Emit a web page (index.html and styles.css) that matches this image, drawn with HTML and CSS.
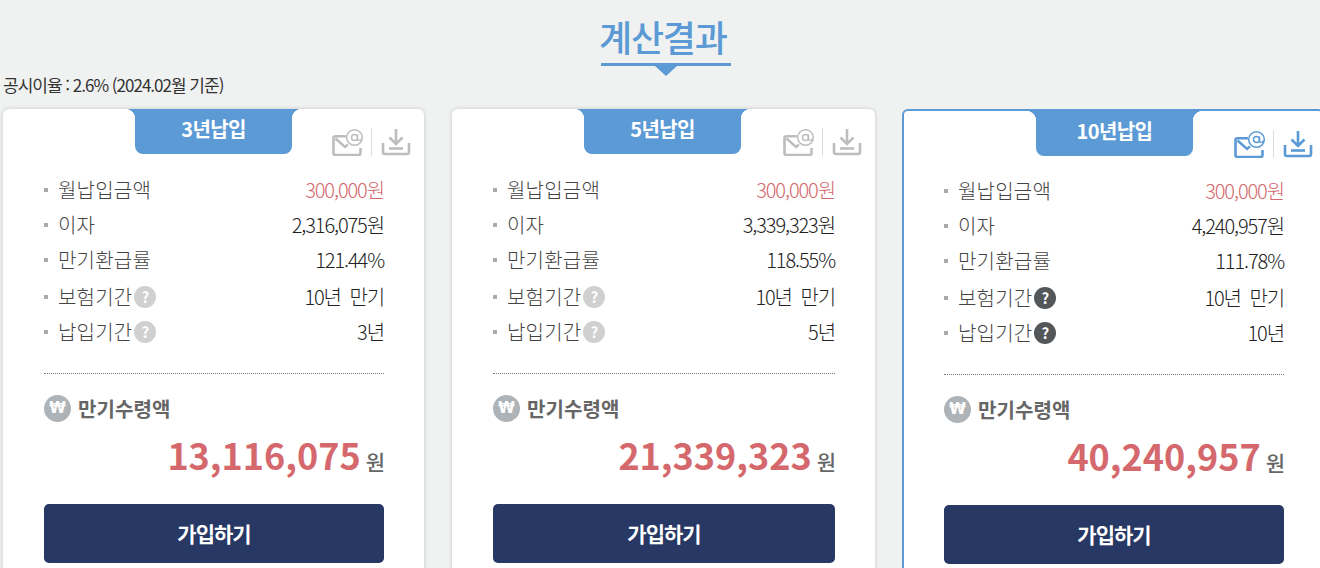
FILE: index.html
```html
<!DOCTYPE html>
<html lang="ko">
<head>
  <meta charset="UTF-8">
  <title>계산결과</title>
  <link rel="stylesheet" href="styles.css">
</head>
<body>
  <svg class="sprites" width="0" height="0">
    <symbol id="ico-mail" viewBox="0 0 32 28">
      <path d="M14 8.200H3.500a2 2 0 0 0-2 2V25a2 2 0 0 0 2 2h23a2 2 0 0 0 2-2v-5" fill="none" stroke="currentColor" stroke-width="2.600"/>
      <path d="M3.500 10.500 13 19l3-2.500" fill="none" stroke="currentColor" stroke-width="2.400"/>
      <circle cx="22.500" cy="9.500" r="7.800" fill="none" stroke="currentColor" stroke-width="1.500"/>
      <circle cx="22.500" cy="9.500" r="3" fill="none" stroke="currentColor" stroke-width="1.500"/>
      <path d="M25.500 6.500v4.500c0 2 3.500 2 4-.5" fill="none" stroke="currentColor" stroke-width="1.300"/>
    </symbol>
    <symbol id="ico-save" viewBox="0 0 30 28">
      <path d="M15 1v14M8.500 9.500 15 16l6.500-6.500" fill="none" stroke="currentColor" stroke-width="2.600"/>
      <path d="M2 15v9a2 2 0 0 0 2 2h22a2 2 0 0 0 2-2v-9" fill="none" stroke="currentColor" stroke-width="2.600"/>
      <path d="M8 20.500h14" stroke="currentColor" stroke-width="2.600"/>
    </symbol>
  </svg>

  <h2 class="title"><span>계산결과</span></h2>
  <p class="rate">공시이율 : 2.6% (2024.02월 기준)</p>

  <div class="cards">
    <div class="card">
      <div class="tab">3년납입</div>
      <div class="tools">
        <svg class="ico mail"><use href="#ico-mail"/></svg>
        <svg class="ico save"><use href="#ico-save"/></svg>
      </div>
      <ul class="list">
        <li><span class="k">월납입금액</span><span class="v red">300,000원</span></li>
        <li><span class="k">이자</span><span class="v">2,316,075원</span></li>
        <li><span class="k">만기환급률</span><span class="v">121.44%</span></li>
        <li class="tall"><span class="k">보험기간<i class="help">?</i></span><span class="v">10년 만기</span></li>
        <li><span class="k">납입기간<i class="help">?</i></span><span class="v">3년</span></li>
      </ul>
      <div class="sum">
        <div class="sum-label"><i class="won">₩</i>만기수령액</div>
        <div class="sum-value"><b>13,116,075</b> <span>원</span></div>
      </div>
      <a class="btn">가입하기</a>
    </div>

    <div class="card">
      <div class="tab">5년납입</div>
      <div class="tools">
        <svg class="ico mail"><use href="#ico-mail"/></svg>
        <svg class="ico save"><use href="#ico-save"/></svg>
      </div>
      <ul class="list">
        <li><span class="k">월납입금액</span><span class="v red">300,000원</span></li>
        <li><span class="k">이자</span><span class="v">3,339,323원</span></li>
        <li><span class="k">만기환급률</span><span class="v">118.55%</span></li>
        <li class="tall"><span class="k">보험기간<i class="help">?</i></span><span class="v">10년 만기</span></li>
        <li><span class="k">납입기간<i class="help">?</i></span><span class="v">5년</span></li>
      </ul>
      <div class="sum">
        <div class="sum-label"><i class="won">₩</i>만기수령액</div>
        <div class="sum-value"><b>21,339,323</b> <span>원</span></div>
      </div>
      <a class="btn">가입하기</a>
    </div>

    <div class="card active">
      <div class="tab">10년납입</div>
      <div class="tools">
        <svg class="ico mail"><use href="#ico-mail"/></svg>
        <svg class="ico save"><use href="#ico-save"/></svg>
      </div>
      <ul class="list">
        <li><span class="k">월납입금액</span><span class="v red">300,000원</span></li>
        <li><span class="k">이자</span><span class="v">4,240,957원</span></li>
        <li><span class="k">만기환급률</span><span class="v">111.78%</span></li>
        <li class="tall"><span class="k">보험기간<i class="help">?</i></span><span class="v">10년 만기</span></li>
        <li><span class="k">납입기간<i class="help">?</i></span><span class="v">10년</span></li>
      </ul>
      <div class="sum">
        <div class="sum-label"><i class="won">₩</i>만기수령액</div>
        <div class="sum-value"><b>40,240,957</b> <span>원</span></div>
      </div>
      <a class="btn">가입하기</a>
    </div>
  </div>
</body>
</html>
```

FILE: styles.css
```css
html, body {
  height: 100%;
  overflow: hidden;
}
body {
  margin: 0;
  background-color: #f0f2f2;
  color: #333;
  font-family: "Noto Sans CJK KR", "Noto Sans", sans-serif;
  letter-spacing: -1px;
}
.sprites {
  position: absolute;
}
.title {
  margin: 0;
  padding: 11px 0 0 12px;
  text-align: center;
  font-size: 36px;
  font-weight: 500;
  line-height: 50px;
  color: #5b9ad5;
  letter-spacing: -1.2px;
}
.title span {
  position: relative;
  display: inline-block;
  width: 130px;
  height: 52px;
  border-bottom: 3px solid #5b9ad5;
  white-space: nowrap;
  text-align: left;
  text-indent: -2px;
}
.title span::after {
  content: "";
  position: absolute;
  left: 54px;
  top: 55px;
  border-top: 10px solid #5b9ad5;
  border-left: 11px solid transparent;
  border-right: 11px solid transparent;
}
.rate {
  margin: 8px 0 0 3px;
  font-size: 17px;
  line-height: 22px;
  color: #333;
}
.cards {
  display: flex;
  margin: 13px 0 0 3px;
  gap: 28px;
}
.card {
  position: relative;
  flex: 0 0 auto;
  width: 421px;
  height: 500px;
  box-sizing: border-box;
  padding: 63px 40px 0 41px;
  background-color: #fff;
  border-radius: 6px;
  box-shadow: 0 0 4px rgba(0, 0, 0, 0.18);
}
.card + .card {
  width: 423px;
}
.card.active {
  width: 422px;
  margin-left: -1px;
  border: 2px solid #5b9ad5;
  padding: 62px 38px 0 40px;
  box-shadow: none;
}
.tab {
  position: absolute;
  top: 0;
  left: 132px;
  width: 157px;
  height: 45px;
  line-height: 40px;
  text-align: center;
  font-size: 20px;
  font-weight: 700;
  letter-spacing: -0.6px;
  color: #fff;
  background-color: #5b9ad5;
  border-radius: 0 0 8px 8px;
}
.tab::before, .tab::after {
  content: "";
  position: absolute;
  top: 0;
  width: 10px;
  height: 10px;
}
.tab::before {
  left: -10px;
  background: radial-gradient(circle at 0 100%, transparent 10px, #5b9ad5 10.500px);
}
.tab::after {
  right: -10px;
  background: radial-gradient(circle at 100% 100%, transparent 10px, #5b9ad5 10.500px);
}
.tools {
  position: absolute;
  top: 19px;
  right: 13px;
  display: flex;
  align-items: center;
  color: #bdbdbd;
}
.active .tools {
  right: 9px;
  color: #5b9ad5;
}
.ico {
  display: block;
}
.ico.mail {
  width: 32px;
  height: 28px;
  padding-right: 7px;
  border-right: 1px solid #ddd;
}
.ico.save {
  width: 30px;
  height: 28px;
  margin-left: 9px;
}
.list {
  list-style: none;
  margin: 0;
  padding: 0 0 24px;
  border-bottom: 1px dotted #777;
}
.list li {
  display: flex;
  justify-content: space-between;
  align-items: center;
  height: 35px;
  font-size: 20px;
}
.list li.tall {
  height: 37px;
  padding-top: 2px;
  box-sizing: border-box;
}
.k {
  position: relative;
  display: flex;
  align-items: center;
  padding-left: 14px;
  color: #444;
  font-weight: 300;
  letter-spacing: 0.2px;
}
.k::before {
  content: "";
  position: absolute;
  left: 0;
  top: 50%;
  width: 4px;
  height: 4px;
  margin-top: -2px;
  background-color: #aaa;
}
.v {
  color: #222;
  font-weight: 300;
  letter-spacing: -1.1px;
  word-spacing: 4px;
}
.v.red {
  color: #d4686c;
}
.help {
  width: 22px;
  height: 22px;
  margin-left: 2px;
  border-radius: 50%;
  background-color: #d0d0d0;
  color: #fff;
  font-style: normal;
  font-weight: 700;
  font-size: 15px;
  line-height: 22px;
  text-align: center;
  letter-spacing: 0;
}
.active .help {
  background-color: #53575a;
}
.sum {
  padding-top: 20px;
}
.sum-label {
  display: flex;
  align-items: center;
  font-size: 20px;
  font-weight: 700;
  color: #666;
  letter-spacing: 0.1px;
}
.won {
  width: 27px;
  height: 27px;
  margin-right: 7px;
  border-radius: 50%;
  background-color: #adb3b7;
  color: #fff;
  font-family: "DejaVu Sans", sans-serif;
  font-style: normal;
  font-weight: 700;
  font-size: 15px;
  line-height: 27px;
  text-align: center;
  letter-spacing: 0;
}
.sum-value {
  margin-top: 4px;
  text-align: right;
  line-height: 54px;
  color: #666;
  font-size: 21px;
  font-weight: 500;
}
.sum-value b {
  color: #d4686c;
  font-size: 36px;
  font-weight: 700;
  letter-spacing: 0;
}
.btn {
  display: block;
  margin-top: 16px;
  height: 59px;
  line-height: 59px;
  text-align: center;
  color: #fff;
  font-size: 21px;
  font-weight: 700;
  background-color: #273864;
  border-radius: 5px;
}
```
